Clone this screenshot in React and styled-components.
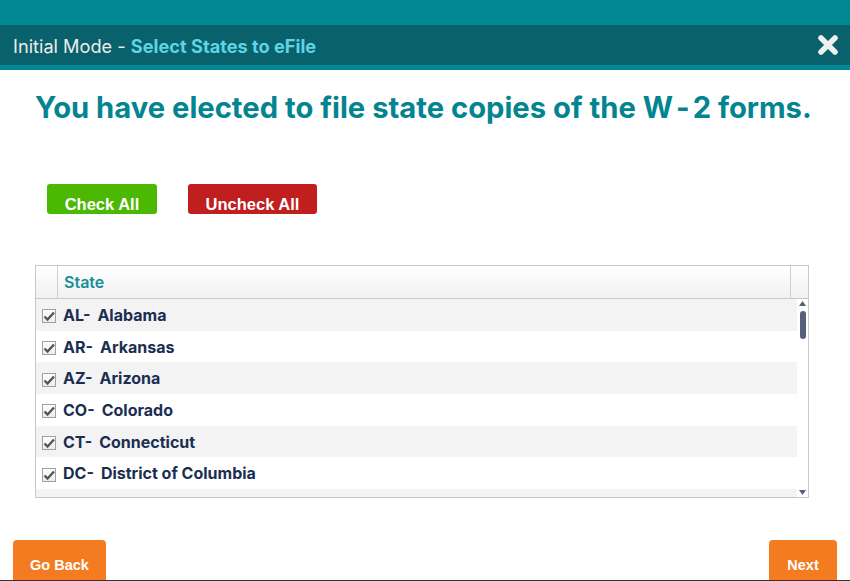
import React from "react";
import styled, { createGlobalStyle } from "styled-components";

const Global = createGlobalStyle`
  html, body { margin: 0; padding: 0; background: #fff; }
  body { font-family: Inter, "Noto Sans", sans-serif; width: 850px; height: 581px; overflow: hidden; }
`;

const Page = styled.div`
  width: 850px;
  height: 581px;
  display: flex;
  flex-direction: column;
  overflow: hidden;
`;

const TopBand = styled.div`
  height: 25px;
  background: #008895;
  flex: none;
`;

const TitleBar = styled.div`
  height: 40px;
  background: #09616b;
  border-bottom: 5px solid #008895;
  display: flex;
  align-items: center;
  justify-content: space-between;
  padding: 0 10px 0 13px;
  flex: none;
`;

const Title = styled.div`
  font-size: 18.2px;
  color: #ececec;
  padding-top: 1px;
`;

const TitleAccent = styled.span`
  color: #5fd4e4;
  font-weight: 700;
`;

const CloseButton = styled.button`
  border: 0;
  background: none;
  padding: 0;
  width: 24px;
  height: 24px;
  display: flex;
  align-items: center;
  justify-content: center;
  cursor: pointer;
`;

const Content = styled.div`
  flex: 1;
  display: flex;
  flex-direction: column;
  padding: 0 35px 0 35px;
`;

const Heading = styled.h1`
  margin: 19px 0 0;
  font-size: 29.2px;
  line-height: 38px;
  font-weight: 700;
  color: #038491;
  white-space: nowrap;
`;

const Dash = styled.span`
  margin: 0 ${(p) => p.space}px;
`;

const ButtonRow = styled.div`
  display: flex;
  gap: 31px;
  margin: 57px 0 0 12px;
`;

const ActionButton = styled.button`
  height: 30px;
  width: ${(p) => p.w}px;
  border: 0;
  border-radius: 3px;
  background: ${(p) => p.bg};
  color: #fff;
  font-family: "Liberation Sans", Arial, sans-serif;
  font-weight: 700;
  font-size: 16.5px;
  line-height: 19px;
  padding: 10px 0 0;
  cursor: pointer;
`;

const Grid = styled.div`
  margin-top: 51px;
  width: 774px;
  height: 233px;
  border: 1px solid #c8c8c8;
  box-sizing: border-box;
  display: flex;
  flex-direction: column;
`;

const HeaderRow = styled.div`
  height: 32px;
  flex: none;
  display: flex;
  border-bottom: 1px solid #c8c8c8;
  background: linear-gradient(#ffffff, #f1f1f1);
`;

const HeaderCell = styled.div`
  width: ${(p) => (p.w ? `${p.w}px` : "auto")};
  flex: ${(p) => (p.w ? "none" : "1")};
  border-left: ${(p) => (p.divider ? "1px solid #d0d0d0" : "0")};
  border-right: ${(p) => (p.rightDivider ? "1px solid #d0d0d0" : "0")};
  display: flex;
  align-items: center;
  padding-left: ${(p) => (p.pad ? "6px" : "0")};
  font-size: 16px;
  font-weight: 600;
  color: #158e9a;
`;

const Body = styled.div`
  flex: 1;
  display: flex;
  min-height: 0;
`;

const Rows = styled.div`
  flex: 1;
  overflow: hidden;
`;

const Row = styled.div`
  height: 31.7px;
  display: flex;
  align-items: center;
  background: ${(p) => (p.alt ? "#f3f3f3" : "#fff")};
`;

const Check = styled.span`
  width: 14px;
  height: 14px;
  margin: 3px 7px 0 6px;
  box-sizing: border-box;
  border: 1px solid #a0a0a0;
  background: linear-gradient(#ffffff, #ececec);
  display: flex;
  align-items: center;
  justify-content: center;
  flex: none;
`;

const StateName = styled.span`
  font-size: 16px;
  font-weight: 700;
  color: #1a2e52;
  white-space: nowrap;
`;

const StateCode = styled.span`
  margin-right: 7px;
`;

const ScrollTrack = styled.div`
  width: 11px;
  flex: none;
  display: flex;
  flex-direction: column;
  align-items: center;
  background: #fff;
`;

const ScrollArrow = styled.div`
  height: 9px;
  display: flex;
  align-items: center;
  justify-content: center;
`;

const ScrollThumb = styled.div`
  width: 6px;
  height: 28px;
  margin-top: 3px;
  border-radius: 3px;
  background: #56607b;
`;

const Spacer = styled.div`
  flex: 1;
`;

const Footer = styled.div`
  height: 40px;
  flex: none;
  display: flex;
  justify-content: space-between;
  align-items: flex-start;
  padding: 0 13px;
  overflow: hidden;
  border-bottom: 1px solid #333;
`;

const NavButton = styled.button`
  height: 44px;
  width: ${(p) => p.w}px;
  border: 0;
  border-radius: 4px;
  background: #f47b20;
  color: #fff;
  font-family: "Liberation Sans", Arial, sans-serif;
  font-weight: 700;
  font-size: 14.5px;
  padding: 5px 0 0;
  cursor: pointer;
`;

const states = [
  ["AL-", "Alabama"],
  ["AR-", "Arkansas"],
  ["AZ-", "Arizona"],
  ["CO-", "Colorado"],
  ["CT-", "Connecticut"],
  ["DC-", "District of Columbia"],
  ["DE-", "Delaware"],
];

const CheckMark = () => (
  <svg width="12" height="12" viewBox="0 0 12 12">
    <path d="M1.5 6.5 L4.5 9.5 L11 2.5" fill="none" stroke="#555" strokeWidth="2.4" strokeLinejoin="miter" />
  </svg>
);

export default function App() {
  return (
    <Page>
      <Global />
      <TopBand />
      <TitleBar>
        <Title>
          Initial Mode - <TitleAccent>Select States to eFile</TitleAccent>
        </Title>
        <CloseButton aria-label="Close">
          <svg width="22" height="22" viewBox="0 0 22 22">
            <path d="M4 4 L18 18 M18 4 L4 18" stroke="#f0f0f0" strokeWidth="5.5" strokeLinecap="round" />
          </svg>
        </CloseButton>
      </TitleBar>
      <Content>
        <Heading>
          You have elected to file state copies of the W<Dash space={3}>-</Dash>2 forms.
        </Heading>
        <ButtonRow>
          <ActionButton bg="#4bb801" w={110}>Check All</ActionButton>
          <ActionButton bg="#c01e1f" w={129}>Uncheck All</ActionButton>
        </ButtonRow>
        <Grid>
          <HeaderRow>
            <HeaderCell w={21} rightDivider />
            <HeaderCell pad>State</HeaderCell>
            <HeaderCell w={17} divider />
          </HeaderRow>
          <Body>
            <Rows>
              {states.map(([code, name], i) => (
                <Row key={code} alt={i % 2 === 0}>
                  <Check>
                    <CheckMark />
                  </Check>
                  <StateName>
                    <StateCode>{code}</StateCode>
                    {name}
                  </StateName>
                </Row>
              ))}
            </Rows>
            <ScrollTrack>
              <ScrollArrow>
                <svg width="7" height="5" viewBox="0 0 7 5"><path d="M0 5 L3.5 0 L7 5 Z" fill="#56607b" /></svg>
              </ScrollArrow>
              <ScrollThumb />
              <Spacer />
              <ScrollArrow>
                <svg width="7" height="5" viewBox="0 0 7 5"><path d="M0 0 L3.5 5 L7 0 Z" fill="#56607b" /></svg>
              </ScrollArrow>
            </ScrollTrack>
          </Body>
        </Grid>
        <Spacer />
      </Content>
      <Footer>
        <NavButton w={93}>Go Back</NavButton>
        <NavButton w={68}>Next</NavButton>
      </Footer>
    </Page>
  );
}
